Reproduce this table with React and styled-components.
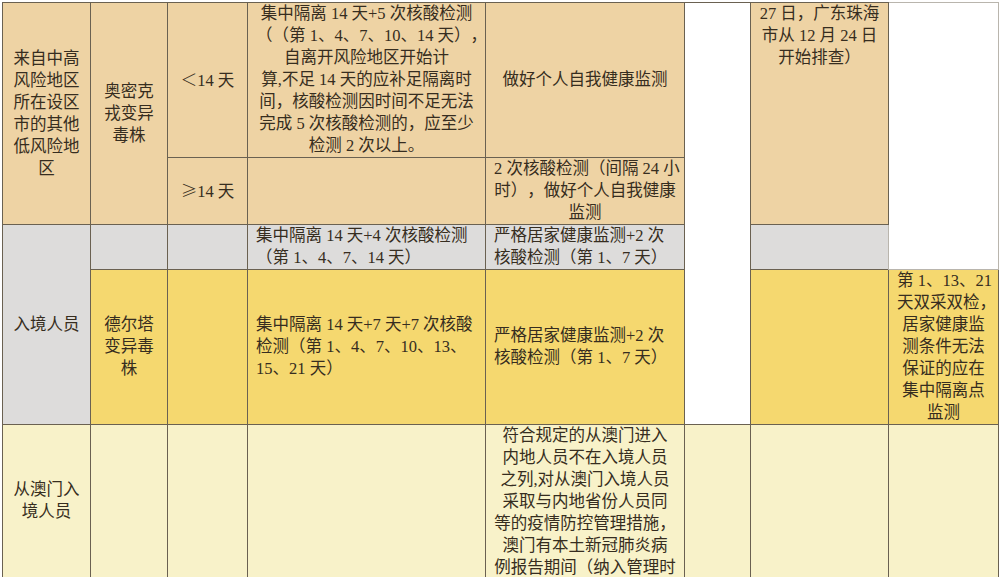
import React from "react";
import styled, { createGlobalStyle } from "styled-components";

const Global = createGlobalStyle`
  html, body { margin: 0; padding: 0; background: #ffffff; }
  body { width: 1000px; height: 577px; overflow: hidden; }
`;

const Page = styled.div`
  padding: 2px 0 0 2px;
`;

const Table = styled.table`
  border-collapse: collapse;
  table-layout: fixed;
  width: 996px;
  font-family: "Liberation Serif", "Noto Sans CJK SC", serif;
  font-size: 16.5px;
  line-height: 22px;
  color: #362d20;
  text-spacing-trim: space-all;
`;

const Row = styled.tr`
  height: ${(p) => p.$h}px;
`;

const colors = {
  tan: "#eed3a4",
  grey: "#dddcdb",
  yellow: "#f5d86f",
  pale: "#f8f2c9",
  white: "#ffffff",
};

const Cell = styled.td`
  background: ${(p) => colors[p.$bg] || colors.white};
  border: 1px solid ${(p) => (p.$soft ? "#b9b5ad" : "#6a6151")};
  padding: 0 8px;
  text-align: ${(p) => p.$align || "center"};
  vertical-align: ${(p) => p.$valign || "middle"};
  white-space: nowrap;
  overflow: hidden;
`;

const Sym = styled.span`
  font-family: "Noto Sans CJK SC", sans-serif;
  font-weight: 300;
`;

const Clip = styled.div`
  height: ${(p) => p.$h}px;
  overflow: hidden;
`;

const Lines = ({ lines }) => (
  <>
    {lines.map((l, i) => (
      <React.Fragment key={i}>
        {i > 0 && <br />}
        {l}
      </React.Fragment>
    ))}
  </>
);

export default function App() {
  return (
    <Page>
      <Global />
      <Table>
        <colgroup>
          <col style={{ width: 88 }} />
          <col style={{ width: 77 }} />
          <col style={{ width: 80 }} />
          <col style={{ width: 238 }} />
          <col style={{ width: 199 }} />
          <col style={{ width: 66 }} />
          <col style={{ width: 138 }} />
          <col style={{ width: 110 }} />
        </colgroup>
        <tbody>
          <Row $h={153}>
            <Cell $bg="tan" rowSpan={2}>
              <Lines lines={["来自中高", "风险地区", "所在设区", "市的其他", "低风险地", "区"]} />
            </Cell>
            <Cell $bg="tan" rowSpan={2}>
              <Lines lines={["奥密克", "戎变异", "毒株"]} />
            </Cell>
            <Cell $bg="tan">
              <Sym>＜</Sym>14 天
            </Cell>
            <Cell $bg="tan">
              <Lines
                lines={[
                  "集中隔离 14 天+5 次核酸检测",
                  "（（第 1、4、7、10、14 天），",
                  "自离开风险地区开始计",
                  "算,不足 14 天的应补足隔离时",
                  "间，核酸检测因时间不足无法",
                  "完成 5 次核酸检测的，应至少",
                  "检测 2 次以上。",
                ]}
              />
            </Cell>
            <Cell $bg="tan">做好个人自我健康监测</Cell>
            <Cell $bg="white" rowSpan={4} />
            <Cell $bg="tan" rowSpan={2} $valign="top">
              <Lines lines={["27 日，广东珠海", "市从 12 月 24 日", "开始排查）"]} />
            </Cell>
            <Cell $bg="white" $soft rowSpan={3} />
          </Row>
          <Row $h={65}>
            <Cell $bg="tan">
              <Sym>≥</Sym>14 天
            </Cell>
            <Cell $bg="tan" />
            <Cell $bg="tan">
              <Lines lines={["2 次核酸检测（间隔 24 小", "时），做好个人自我健康", "监测"]} />
            </Cell>
          </Row>
          <Row $h={44}>
            <Cell $bg="grey" rowSpan={2}>入境人员</Cell>
            <Cell $bg="grey" />
            <Cell $bg="grey" />
            <Cell $bg="grey" $align="left">
              <Lines lines={["集中隔离 14 天+4 次核酸检测", "（第 1、4、7、14 天）"]} />
            </Cell>
            <Cell $bg="grey" $align="left">
              <Lines lines={["严格居家健康监测+2 次", "核酸检测（第 1、7 天）"]} />
            </Cell>
            <Cell $bg="grey" />
          </Row>
          <Row $h={153}>
            <Cell $bg="yellow">
              <Lines lines={["德尔塔", "变异毒", "株"]} />
            </Cell>
            <Cell $bg="yellow" />
            <Cell $bg="yellow" $align="left">
              <Lines
                lines={[
                  "集中隔离 14 天+7 天+7 次核酸",
                  "检测（第 1、4、7、10、13、",
                  "15、21 天）",
                ]}
              />
            </Cell>
            <Cell $bg="yellow" $align="left">
              <Lines lines={["严格居家健康监测+2 次", "核酸检测（第 1、7 天）"]} />
            </Cell>
            <Cell $bg="yellow" />
            <Cell $bg="yellow">
              <Lines
                lines={[
                  "第 1、13、21",
                  "天双采双检，",
                  "居家健康监",
                  "测条件无法",
                  "保证的应在",
                  "集中隔离点",
                  "监测",
                ]}
              />
            </Cell>
          </Row>
          <Row $h={153}>
            <Cell $bg="pale">
              <Lines lines={["从澳门入", "境人员"]} />
            </Cell>
            <Cell $bg="pale" />
            <Cell $bg="pale" />
            <Cell $bg="pale" />
            <Cell $bg="pale" $valign="top">
              <Clip $h={152}>
                <Lines
                  lines={[
                    "符合规定的从澳门进入",
                    "内地人员不在入境人员",
                    "之列,对从澳门入境人员",
                    "采取与内地省份人员同",
                    "等的疫情防控管理措施，",
                    "澳门有本土新冠肺炎病",
                    "例报告期间（纳入管理时",
                  ]}
                />
              </Clip>
            </Cell>
            <Cell $bg="pale" />
            <Cell $bg="pale" />
            <Cell $bg="pale" />
          </Row>
        </tbody>
      </Table>
    </Page>
  );
}
